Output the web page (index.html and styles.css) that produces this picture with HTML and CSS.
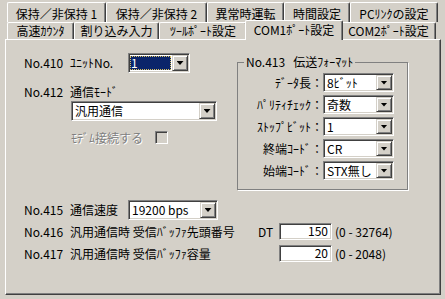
FILE: index.html
```html
<!DOCTYPE html>
<html lang="ja">
<head>
    <meta charset="UTF-8">
    <title>COM1ポート設定</title>
    <link rel="stylesheet" href="styles.css">
</head>
<body>

    <div class="tabs">
        <div class="tab-row back">
            <div class="tab t1">保持／非保持 1</div>
            <div class="tab t2">保持／非保持 2</div>
            <div class="tab t3">異常時運転</div>
            <div class="tab t4">時間設定</div>
            <div class="tab t5">PCﾘﾝｸの設定</div>
        </div>
        <div class="tab-row front">
            <div class="tab f1">高速ｶｳﾝﾀ</div>
            <div class="tab f2">割り込み入力</div>
            <div class="tab f3">ﾂｰﾙﾎﾟｰﾄ設定</div>
            <div class="tab f4 active">COM1ﾎﾟｰﾄ設定</div>
            <div class="tab f5">COM2ﾎﾟｰﾄ設定</div>
        </div>
    </div>

    <div class="panel">
        <div class="top">
            <div class="left">
                <div class="row r410">
                    <span class="no">No.410</span>
                    <span class="lbl">ﾕﾆｯﾄNo.</span>
                    <div class="combo unit"><span class="val sel">1</span><span class="btn"></span></div>
                </div>
                <div class="row r412">
                    <span class="no">No.412</span>
                    <span class="lbl">通信ﾓｰﾄﾞ</span>
                </div>
                <div class="combo mode"><span class="val">汎用通信</span><span class="btn"></span></div>
                <div class="modem">
                    <span class="disabled">ﾓﾃﾞﾑ接続する</span>
                    <span class="check"></span>
                </div>
            </div>

            <fieldset class="group">
                <legend>No.413<span class="sp"></span>伝送ﾌｫｰﾏｯﾄ</legend>
                <div class="fmt">
                    <span class="flbl">ﾃﾞｰﾀ長：</span>
                    <div class="combo small"><span class="val">8ﾋﾞｯﾄ</span><span class="btn"></span></div>
                    <span class="flbl">ﾊﾟﾘﾃｨﾁｪｯｸ：</span>
                    <div class="combo small"><span class="val">奇数</span><span class="btn"></span></div>
                    <span class="flbl">ｽﾄｯﾌﾟﾋﾞｯﾄ：</span>
                    <div class="combo small"><span class="val">1</span><span class="btn"></span></div>
                    <span class="flbl">終端ｺｰﾄﾞ：</span>
                    <div class="combo small"><span class="val">CR</span><span class="btn"></span></div>
                    <span class="flbl">始端ｺｰﾄﾞ：</span>
                    <div class="combo small"><span class="val">STX無し</span><span class="btn"></span></div>
                </div>
            </fieldset>
        </div>

        <div class="bottom">
            <div class="row r415">
                <span class="no">No.415</span>
                <span class="lbl">通信速度</span>
                <div class="combo speed"><span class="val">19200 bps</span><span class="btn"></span></div>
            </div>
            <div class="row r416">
                <span class="no">No.416</span>
                <span class="lbl long">汎用通信時 受信ﾊﾞｯﾌｧ先頭番号</span>
                <span class="dt">DT</span>
                <span class="edit">150</span>
                <span class="range">(0 - 32764)</span>
            </div>
            <div class="row r417">
                <span class="no">No.417</span>
                <span class="lbl long">汎用通信時 受信ﾊﾞｯﾌｧ容量</span>
                <span class="dt"></span>
                <span class="edit">20</span>
                <span class="range">(0 - 2048)</span>
            </div>
        </div>
    </div>

</body>
</html>
```

FILE: styles.css
```css
body { margin: 0; padding: 2px 0 0 5px; background: #d4d0c8; font-family: "Noto Sans CJK JP", sans-serif; font-size: 12px; line-height: 14px; color: #000; }

/* tabs */
.tabs { margin-left: 2px; width: 431px; }
.tab-row { display: flex; }
.tab { box-sizing: border-box; display: flex; align-items: center; justify-content: center; white-space: nowrap; background: #d4d0c8; border-left: 1px solid #fff; border-top: 1px solid #fff; border-right: 1px solid #404040; box-shadow: inset -1px 0 #808080; border-radius: 2px 2px 0 0; }
.back .tab { height: 20px; padding-top: 2px; }
.front .tab { height: 17px; }
.t1 { width: 99px; } .t2 { width: 101px; } .t3 { width: 77px; } .t4 { width: 66px; } .t5 { width: 88px; }
.f1 { width: 67px; } .f2 { width: 85px; } .f3 { width: 88px; } .f4 { width: 94px; } .f5 { width: 95px; }
.tab.active { position: relative; z-index: 2; width: 98px; height: 20px; margin: -2px -2px -1px; padding-bottom: 2px; }

/* page body */
.panel { box-sizing: border-box; width: 436px; height: 256px; border: 1px solid; border-color: #fff #404040 #404040 #fff; box-shadow: inset -1px -1px #808080; padding: 13px 0 0 18px; }
.top { display: flex; }
.left { width: 213px; }
.row { display: flex; align-items: center; }
.no { width: 46px; }
.lbl { width: 58px; }
.r410 { height: 20px; }
.r412 { height: 16px; margin-top: 11px; }

/* combo box */
.combo { box-sizing: border-box; display: flex; height: 20px; padding: 1px; background: #fff; border: 1px solid; border-color: #808080 #fff #fff #808080; box-shadow: inset 1px 1px #404040, inset -1px -1px #d4d0c8; }
.combo .val { flex: 1; display: flex; align-items: center; padding-left: 2px; white-space: nowrap; overflow: hidden; }
.combo .val.sel { margin: 1px 1px 1px 0; padding-left: 1px; overflow: visible; background: #0a246a; color: #fff; outline: 1px dotted #d8c060; outline-offset: -1px; }
.combo .btn { box-sizing: border-box; width: 16px; display: flex; align-items: center; justify-content: center; background: #d4d0c8; border: 1px solid; border-color: #d4d0c8 #404040 #404040 #d4d0c8; box-shadow: inset 1px 1px #fff, inset -1px -1px #808080; }
.combo .btn::after { content: ""; width: 7px; height: 4px; background: #000; clip-path: polygon(0 0, 100% 0, 50% 100%); }
.unit { width: 62px; }
.mode { width: 146px; margin: 1px 0 0 47px; }
.speed { width: 90px; }
.small { height: 19px; }

.modem { display: flex; align-items: center; margin: 10px 0 0 47px; height: 13px; }
.disabled { width: 84px; color: #808080; text-shadow: 1px 1px #fff; }
.check { box-sizing: border-box; width: 13px; height: 13px; border: 1px solid; border-color: #808080 #fff #fff #808080; box-shadow: inset 1px 1px #404040, inset -1px -1px #d4d0c8; background: #d4d0c8; }

/* group box */
.group { box-sizing: border-box; width: 170px; height: 135px; margin: 2px 0 0; padding: 4px 13px 0 0; border: 1px solid #808080; box-shadow: 1px 1px #fff; }
.group legend { margin-left: 6px; padding: 0 2px; }
.group .sp { display: inline-block; width: 8px; }
.fmt { display: grid; grid-template-columns: 85px 71px; grid-auto-rows: 19px; row-gap: 3px; align-items: center; }
.flbl { text-align: right; white-space: nowrap; }

/* bottom rows */
.bottom { margin-top: 10px; }
.r415 { height: 20px; }
.r416 { height: 17px; margin-top: 3px; }
.r417 { height: 17px; margin-top: 5px; }
.long { width: 188px; white-space: nowrap; }
.dt { width: 21px; }
.edit { box-sizing: border-box; width: 53px; height: 17px; padding-right: 3px; text-align: right; line-height: 13px; background: #fff; border: 1px solid; border-color: #808080 #fff #fff #808080; box-shadow: inset 1px 1px #404040, inset -1px -1px #d4d0c8; }
.range { margin-left: 3px; }
```
